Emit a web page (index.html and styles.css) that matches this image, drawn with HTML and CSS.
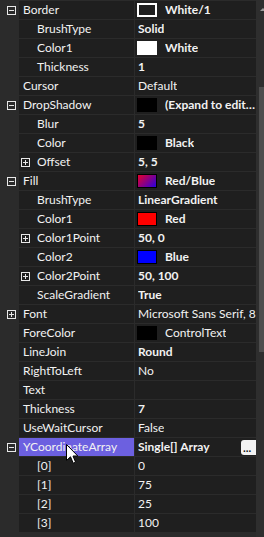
FILE: index.html
```html
<!DOCTYPE html>
<html lang="en">

<head>
    <meta charset="UTF-8">
    <meta name="viewport" content="width=device-width, initial-scale=1.0">
    <title>Property Grid</title>
    <link rel="stylesheet" href="styles.css">
</head>

<body>
    <!-- property grid -->
    <div class="grid">
        <div class="rows">
            <div class="row"><span class="gutter"><i class="exp"></i></span><span class="name">Border</span><span class="value b"><i class="sw sw-frame"></i><em>White/1</em></span></div>
            <div class="row"><span class="gutter"></span><span class="name sub">BrushType</span><span class="value b"><em>Solid</em></span></div>
            <div class="row"><span class="gutter"></span><span class="name sub">Color1</span><span class="value b"><i class="sw sw-white"></i><em>White</em></span></div>
            <div class="row"><span class="gutter"></span><span class="name sub">Thickness</span><span class="value b"><em>1</em></span></div>
            <div class="row"><span class="gutter"></span><span class="name">Cursor</span><span class="value"><em>Default</em></span></div>
            <div class="row"><span class="gutter"><i class="exp"></i></span><span class="name">DropShadow</span><span class="value b"><i class="sw sw-black"></i><em class="cut">(Expand to edit...)</em></span></div>
            <div class="row"><span class="gutter"></span><span class="name sub">Blur</span><span class="value b"><em>5</em></span></div>
            <div class="row"><span class="gutter"></span><span class="name sub">Color</span><span class="value b"><i class="sw sw-black"></i><em>Black</em></span></div>
            <div class="row"><span class="gutter"></span><span class="name sub2"><i class="exp plus"></i>Offset</span><span class="value b"><em>5, 5</em></span></div>
            <div class="row"><span class="gutter"><i class="exp"></i></span><span class="name">Fill</span><span class="value b"><i class="sw sw-grad"></i><em>Red/Blue</em></span></div>
            <div class="row"><span class="gutter"></span><span class="name sub">BrushType</span><span class="value b"><em>LinearGradient</em></span></div>
            <div class="row"><span class="gutter"></span><span class="name sub">Color1</span><span class="value b"><i class="sw sw-red"></i><em>Red</em></span></div>
            <div class="row"><span class="gutter"></span><span class="name sub2"><i class="exp plus"></i>Color1Point</span><span class="value b"><em>50, 0</em></span></div>
            <div class="row"><span class="gutter"></span><span class="name sub">Color2</span><span class="value b"><i class="sw sw-blue"></i><em>Blue</em></span></div>
            <div class="row"><span class="gutter"></span><span class="name sub2"><i class="exp plus"></i>Color2Point</span><span class="value b"><em>50, 100</em></span></div>
            <div class="row"><span class="gutter"></span><span class="name sub">ScaleGradient</span><span class="value b"><em>True</em></span></div>
            <div class="row"><span class="gutter"><i class="exp plus"></i></span><span class="name">Font</span><span class="value"><em>Microsoft Sans Serif, 8</em></span></div>
            <div class="row"><span class="gutter"></span><span class="name">ForeColor</span><span class="value"><i class="sw sw-black"></i><em>ControlText</em></span></div>
            <div class="row"><span class="gutter"></span><span class="name">LineJoin</span><span class="value b"><em>Round</em></span></div>
            <div class="row"><span class="gutter"></span><span class="name">RightToLeft</span><span class="value"><em>No</em></span></div>
            <div class="row"><span class="gutter"></span><span class="name">Text</span><span class="value"><em></em></span></div>
            <div class="row"><span class="gutter"></span><span class="name">Thickness</span><span class="value b"><em>7</em></span></div>
            <div class="row"><span class="gutter"></span><span class="name">UseWaitCursor</span><span class="value"><em>False</em></span></div>
            <div class="row sel"><span class="gutter"><i class="exp"></i></span><span class="name">YCoordinateArray</span><span class="value b"><em>Single[] Array</em><button class="dots">...</button></span></div>
            <div class="row"><span class="gutter"></span><span class="name sub">[0]</span><span class="value"><em>0</em></span></div>
            <div class="row"><span class="gutter"></span><span class="name sub">[1]</span><span class="value"><em>75</em></span></div>
            <div class="row"><span class="gutter"></span><span class="name sub">[2]</span><span class="value"><em>25</em></span></div>
            <div class="row"><span class="gutter"></span><span class="name sub">[3]</span><span class="value"><em>100</em></span></div>
        </div>
        <!-- scrollbar -->
        <div class="scroll">
            <i class="arrow"></i>
            <i class="thumb"></i>
        </div>
    </div>

    <!-- mouse pointer -->
    <svg class="pointer" width="13" height="20" viewBox="0 0 13 20">
        <path d="M0.5 0.5 L0.5 16.5 L4.5 12.8 L7.2 19.2 L9.6 18.2 L7 12 L11.8 12 Z" fill="#fff" stroke="#000" stroke-width="1" stroke-linejoin="miter" />
    </svg>
</body>

</html>
```

FILE: styles.css
```css
html,
body {
    margin: 0;
    padding: 0;
    background: #2b2b2b;
}

body {
    width: 264px;
    height: 537px;
    overflow: hidden;
    font-family: Lato, "Liberation Sans", sans-serif;
    font-size: 12px;
    color: #f2f2f2;
}

.grid {
    display: flex;
    height: 537px;
}

.rows {
    width: 256px;
    padding-top: 1px;
    display: flex;
    flex-direction: column;
    gap: 1px;
}

.row {
    display: flex;
    height: 18px;
    line-height: 18px;
}

.gutter {
    width: 19px;
    flex: none;
    display: flex;
    align-items: center;
    padding-left: 7px;
    box-sizing: border-box;
}

.name {
    width: 115px;
    flex: none;
    background: #1f1f1f;
    padding-left: 4px;
    box-sizing: border-box;
    white-space: nowrap;
    display: flex;
    align-items: center;
}

.name.sub {
    padding-left: 18px;
}

.name.sub2 {
    padding-left: 2px;
}

.name.sub2 .exp {
    margin-right: 7px;
}

.value {
    flex: 1;
    min-width: 0;
    margin-left: 1px;
    background: #1f1f1f;
    display: flex;
    align-items: center;
    padding-left: 3px;
    white-space: nowrap;
    overflow: hidden;
}

.value em {
    font-style: normal;
    overflow: hidden;
    min-width: 0;
}

.value em.cut {
    text-overflow: ellipsis;
}

.value.b {
    font-weight: bold;
}

/* color swatches */
.sw {
    width: 20px;
    height: 14px;
    flex: none;
    box-sizing: border-box;
    border: 1px solid #000;
    margin-left: -1px;
    margin-right: 8px;
}

.sw-frame {
    border: 2px solid #fff;
    background: #1f1f1f;
}

.sw-white {
    background: #fff;
    border-color: #fff;
}

.sw-black {
    background: #000;
}

.sw-red {
    background: #ff0000;
}

.sw-blue {
    background: #0000ff;
}

.sw-grad {
    background: linear-gradient(135deg, #e8002a, #2a00e0);
}

/* expand / collapse boxes */
.exp {
    position: relative;
    width: 9px;
    height: 9px;
    flex: none;
    box-sizing: border-box;
    border: 1px solid #e8e8e8;
}

.exp::before {
    content: "";
    position: absolute;
    left: 1px;
    top: 3px;
    width: 5px;
    height: 1px;
    background: #e8e8e8;
}

.exp.plus::after {
    content: "";
    position: absolute;
    left: 3px;
    top: 1px;
    width: 1px;
    height: 5px;
    background: #e8e8e8;
}

/* selected row */
.row.sel .name {
    background: #6c60e0;
}

.dots {
    margin-left: auto;
    flex: none;
    width: 15px;
    height: 15px;
    padding: 0 0 0 2px;
    border: none;
    border-radius: 3px 0 0 3px;
    background: #f2f2f2;
    color: #111;
    font-family: "Liberation Sans", sans-serif;
    font-size: 10px;
    font-weight: bold;
    line-height: 18px;
    text-align: left;
    overflow: hidden;
}

/* scrollbar */
.scroll {
    position: relative;
    width: 8px;
    background: #2e2e2e;
}

.scroll .arrow {
    position: absolute;
    left: 4px;
    top: 8px;
    border-left: 3px solid transparent;
    border-right: 3px solid transparent;
    border-bottom: 3px solid #9a9a9a;
}

.scroll .thumb {
    position: absolute;
    left: 3px;
    top: 87px;
    width: 5px;
    height: 265px;
    background: #4d4d4d;
}

.pointer {
    position: absolute;
    left: 66px;
    top: 444px;
}
```
